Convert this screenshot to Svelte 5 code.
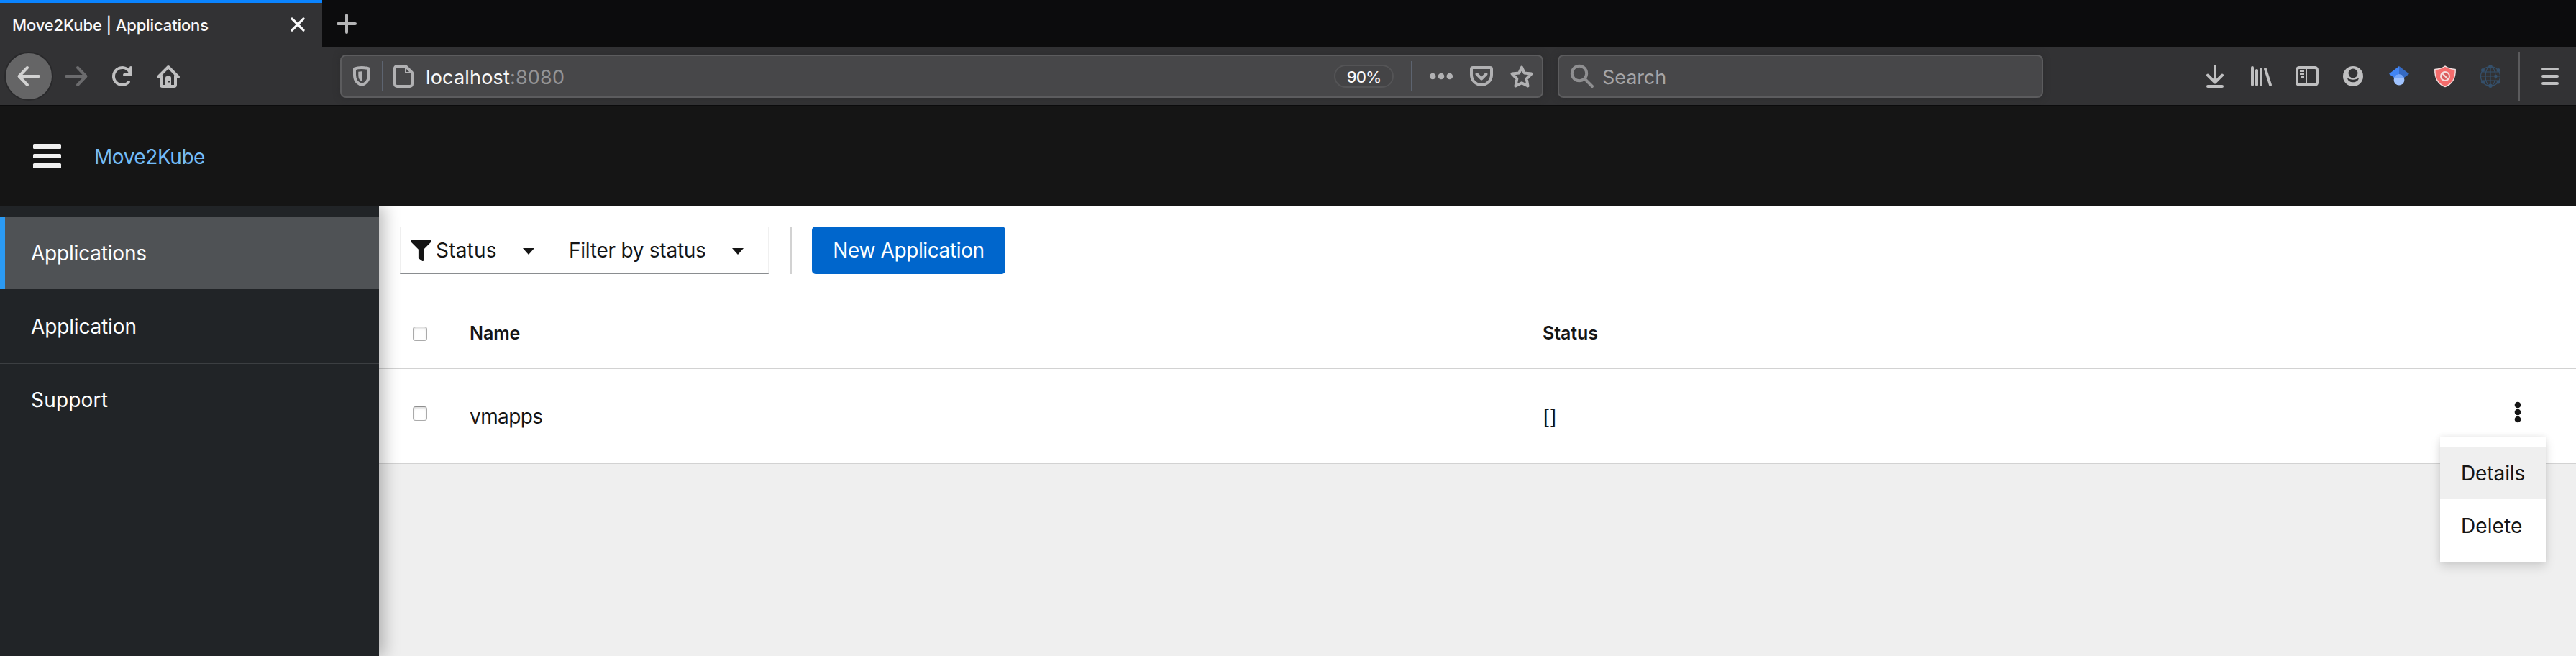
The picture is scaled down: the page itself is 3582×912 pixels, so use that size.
<script>
  const navItems = [
    { label: 'Applications', active: true, key: 'apps' },
    { label: 'Application', active: false, key: 'app' },
    { label: 'Support', active: false, key: 'support' }
  ];
</script>

<div class="window">
  <div class="tabs">
    <div class="tab">
      <span class="tab-title">Move2Kube | Applications</span>
      <svg class="close" viewBox="0 0 20 20"><path d="M2 2L18 18M18 2L2 18" /></svg>
    </div>
    <svg class="plus" viewBox="0 0 28 28"><path d="M14 2V26M2 14H26" /></svg>
  </div>

  <div class="toolbar">
    <div class="back"><svg class="ic" viewBox="0 0 32 32"><path d="M30 16H3M14 4L2.5 16L14 28" /></svg></div>
    <svg class="ic forward" viewBox="0 0 32 32"><path d="M2 16H29M18 4L29.5 16L18 28" /></svg>
    <svg class="ic" viewBox="0 0 32 32">
      <path d="M24.9 24A12 12 0 1 1 26 9.4" /><path d="M28 4V14H19" /><path class="fill" d="M28 6V14H22Z" />
    </svg>
    <svg class="ic" viewBox="0 0 32 32">
      <path d="M2 17L16 3L30 17M6 15V28a2 2 0 0 0 2 2H24a2 2 0 0 0 2-2V15" />
      <path class="fill" fill-rule="evenodd" d="M12 31V18a2 2 0 0 1 2-2h4a2 2 0 0 1 2 2V31ZM16 22h2.2v2.4H16Z" />
    </svg>

    <div class="field url">
      <svg class="ic" viewBox="0 0 32 32">
        <path d="M16 4C12 4 8.500 4.600 6 5.600V14C6 21.500 9.500 26 16 28C22.500 26 26 21.500 26 14V5.600C23.500 4.600 20 4 16 4Z" />
        <path class="fill" d="M16 9.300V23C13 21.500 11.300 19 11.300 15V9.800Z" />
      </svg>
      <i class="rule"></i>
      <svg class="ic page" viewBox="0 0 32 32">
        <path d="M7 2H19L28 11V27a3 3 0 0 1-3 3H7a3 3 0 0 1-3-3V5a3 3 0 0 1 3-3Z" />
        <path class="thin" d="M19 3V11H28" />
      </svg>
      <span class="address">localhost<em>:8080</em></span>
      <span class="zoom">90%</span>
      <i class="rule"></i>
      <svg class="ic fill" viewBox="0 0 32 32"><circle cx="4.200" cy="16" r="4.300" /><circle cx="16" cy="16" r="4.300" /><circle cx="27.800" cy="16" r="4.300" /></svg>
      <svg class="ic" viewBox="0 0 32 32"><path d="M4 4H28a2 2 0 0 1 2 2V14A14 14 0 0 1 2 14V6a2 2 0 0 1 2-2ZM9.500 13L16 19.500L22.500 13" /></svg>
      <svg class="ic" viewBox="0 0 32 32"><path d="M16 3.500L19.700 11.500L29.500 12.500L22.700 19.500L24.500 29.500L16 25.200L7.500 29.500L9.300 19.500L2.500 12.500L12.300 11.500Z" /></svg>
    </div>

    <div class="field search">
      <svg class="ic" viewBox="0 0 32 32"><circle cx="12" cy="12" r="10.200" /><path d="M19.500 19.500L30 30" /></svg>
      <span>Search</span>
    </div>

    <div class="actions">
      <svg class="ic" viewBox="0 0 32 32"><path d="M16 2V24M6 14.500L16 24.500L26 14.500M6 30H26" /></svg>
      <svg class="ic" viewBox="0 0 32 32"><path d="M4 4V28M10 8V28M16 6V28M22 6L29 28" /></svg>
      <svg class="ic" viewBox="0 0 32 32"><rect x="2" y="4" width="28" height="24" rx="3" /><path class="thin" d="M15 4V28M6 9H12M6 13H12M8 17H12" /></svg>
      <svg class="ic" viewBox="0 0 32 32">
        <circle class="fill" cx="16" cy="16" r="14" /><circle class="hole" cx="16" cy="12" r="6.400" />
        <path class="hole" d="M8 18.300C12 21.500 20 21.500 24 18.300C23 26.300 9 26.300 8 18.300Z" />
      </svg>
      <svg class="ic color" viewBox="0 0 32 32">
        <path fill="#4285f4" d="M16 2L2 12.700L9 18H16Z" /><path fill="#356ac3" d="M16 2L30 12.700L23 18H16Z" />
        <circle fill="#a0c3ff" cx="16" cy="21" r="7.400" /><path fill="#76a7fa" d="M9.200 18a7.400 7.400 0 0 1 13.600 0Z" />
      </svg>
      <svg class="ic color" viewBox="0 0 32 32">
        <path fill="#f46c6c" stroke="#f1dede" stroke-width="1.500" d="M16 2C12 5 7 6.200 1.800 6.400C1.500 19 5.500 26.500 16 30.500C26.500 26.500 30.500 19 30.200 6.400C25 6.200 20 5 16 2Z" />
        <circle fill="#d95c5d" stroke="#f4dcdc" stroke-width="2" cx="16" cy="16" r="6" /><path stroke="#f4dcdc" stroke-width="2" d="M12 12L20 20" />
      </svg>
      <svg class="ic globe" viewBox="0 0 32 32">
        <circle cx="15" cy="16" r="13.500" /><ellipse cx="15" cy="16" rx="7" ry="13.500" />
        <path d="M15 2V30M1.500 16H28.500M4 10H26M4 22H26" />
        <g class="nodes"><circle cx="15" cy="2.700" r="2.700" /><circle cx="15" cy="29.300" r="2.700" /><circle cx="4.500" cy="7.500" r="2.500" /><circle cx="26" cy="7.500" r="2.500" /><circle cx="4.500" cy="24" r="2.500" /><circle cx="26" cy="24" r="2.500" /><circle cx="22.400" cy="16" r="2.300" /></g>
      </svg>
      <i class="tall"></i>
      <svg class="ic" viewBox="0 0 32 32"><path d="M6 6H26M6 16H26M6 26H26" /></svg>
    </div>
  </div>

  <header>
    <div class="burger"><i></i><i></i><i></i></div>
    <span class="brand">Move2Kube</span>
  </header>

  <div class="body">
    <nav>
      {#each navItems as item (item.key)}
        <div class="nav-item {item.key}" class:active={item.active}>{item.label}</div>
      {/each}
    </nav>
    <main>
      <div class="content">
        <div class="filters">
          <div class="select kind">
            <svg class="funnel" viewBox="0 0 512 512"><path d="M487.976 0H24.028C2.710 0-8.047 25.866 7.058 40.971L192 225.941V432c0 7.831 3.821 15.170 10.237 19.662l80 55.980C298.020 518.690 320 507.493 320 487.980V225.941L504.942 40.971C520.021 25.896 509.338 0 487.976 0Z" /></svg>
            <span>Status</span><b class="caret"></b>
          </div>
          <div class="select value"><span>Filter by status</span><b class="caret"></b></div>
          <i class="sep"></i>
          <div class="button">New Application</div>
        </div>
        <div class="row head">
          <i class="check"></i><span class="name">Name</span><span class="status">Status</span>
        </div>
        <div class="row data">
          <i class="check"></i><span class="name">vmapps</span><span class="status">[]</span>
          <div class="kebab">
            <svg viewBox="0 0 10 30"><circle cx="5" cy="5" r="4.300" /><circle cx="5" cy="15" r="4.300" /><circle cx="5" cy="25" r="4.300" /></svg>
            <div class="menu"><div class="option hover">Details</div><div class="option delete">Delete</div></div>
          </div>
        </div>
      </div>
    </main>
  </div>
</div>

<style>
  :global(body) { margin: 0; background: #efefef; }
  .window { width: 3582px; height: 912px; overflow: hidden; display: flex; flex-direction: column; font-family: Inter, "Liberation Sans", sans-serif; font-size: 28px; color: #151515; white-space: nowrap; }
  i, em { font-style: normal; }
  svg { display: block; flex: none; }

  .tabs { height: 66px; flex: none; display: flex; background: #0c0c0d; }
  .tab { box-sizing: border-box; width: 448px; border-top: 4px solid #0a84ff; background: #323234; display: flex; align-items: flex-start; justify-content: space-between; padding: 16px 24px 0 17px; }
  .tab-title { color: #f9f9fa; font-size: 22px; font-weight: 500; line-height: 30px; letter-spacing: -0.12px; }
  .close { width: 20px; height: 20px; margin-top: 4px; stroke: #f9f9fa; stroke-width: 3.2; stroke-linecap: round; }
  .plus { width: 28px; height: 28px; margin: 19px 0 0 20px; stroke: #b5b5b6; stroke-width: 4; stroke-linecap: round; }

  .toolbar { box-sizing: border-box; height: 82px; flex: none; display: flex; align-items: center; background: #323234; border-bottom: 2px solid #0c0c0d; padding: 0 20px 0 6px; }
  .ic { width: 32px; height: 32px; overflow: visible; fill: none; stroke: #bfbfc0; stroke-width: 4; stroke-linecap: round; stroke-linejoin: round; }
  .ic .fill, .ic.fill { fill: #bfbfc0; stroke: none; }
  .ic .thin { stroke-width: 2; stroke-linecap: butt; }
  .ic .hole { fill: #323234; stroke: none; }
  .ic.color { stroke: none; }
  .toolbar > .ic { margin-right: 32px; }
  .back { box-sizing: border-box; width: 68px; height: 68px; margin-right: 16px; border: 2px solid #29292b; border-radius: 50%; background: #656566; display: flex; align-items: center; justify-content: center; }
  .back .ic { stroke: #d2d2d2; }
  .ic.forward { stroke: #6b6b6d; }
  .field { box-sizing: border-box; height: 60px; border: 2px solid #5c5c5e; border-radius: 8px; background: #474749; display: flex; align-items: center; box-shadow: 0 0 10px #2c2c2e; }
  .field .ic { stroke: #b1b1b3; }
  .field .fill { fill: #b1b1b3; stroke: none; }
  .url { width: 1673px; margin-left: 191px; padding: 0 12px; }
  .rule { width: 2px; height: 42px; margin-left: 12px; background: #5d6470; }
  .page { margin: 0 15px 0 12px; }
  .address { flex: 1; color: #f9f9fa; font-size: 27px; line-height: 40px; padding-top: 3px; letter-spacing: 0.18px; }
  .address em { color: #949496; }
  .zoom { box-sizing: border-box; width: 83px; height: 32px; border: 2px solid #545456; border-radius: 16px; color: #f9f9fa; font-size: 22px; font-weight: 500; line-height: 30px; letter-spacing: -0.8px; text-align: center; background: #444446; }
  .zoom ~ .rule { margin-left: 24px; }
  .zoom ~ .ic { margin-left: 24px; }
  .field.url .ic.fill { stroke: none; }
  .search { width: 675px; margin-left: 20px; padding-left: 16px; }
  .search .ic { stroke: #8f8f91; }
  .search span { color: #a5a5a7; font-size: 27px; line-height: 40px; padding-top: 3px; margin-left: 12px; letter-spacing: -0.1px; }
  .actions { margin-left: auto; display: flex; align-items: center; gap: 32px; }
  .tall { width: 2px; height: 68px; margin: 0 -6px 0 -10px; background: #5b5b5d; }
  .globe { stroke: #35506b; stroke-width: 1.2; }
  .nodes { fill: #35506b; stroke: none; }

  header { height: 138px; flex: none; background: #151515; display: flex; align-items: flex-start; padding-left: 46px; }
  .burger { width: 39px; margin-top: 52px; display: flex; flex-direction: column; gap: 7px; }
  .burger i { height: 6.600px; border-radius: 1.500px; background: #f0f0f0; }
  .brand { margin: 50px 0 0 46px; color: #73bcf7; line-height: 40px; letter-spacing: -0.45px; }

  .body { flex: 1; display: flex; min-height: 0; }
  nav { width: 527px; flex: none; background: #212427; padding-top: 15px; box-shadow: 8px 0 20px rgba(3, 3, 3, 0.25); position: relative; clip-path: inset(0 -40px 0 0); color: #fff; }
  .nav-item { box-sizing: border-box; height: 102px; padding-left: 43px; line-height: 101px; letter-spacing: -0.15px; border-bottom: 1px solid #3c3f42; }
  .nav-item.active { height: 101px; border-bottom: 0; border-left: 7px solid #2b9af3; background: #4f5255; padding-left: 36px; line-height: 102px; letter-spacing: -0.2px; margin-bottom: 2px; }
  .nav-item.support { letter-spacing: 0.2px; }

  main { flex: 1; min-width: 0; background: #efefef; }
  .content { background: #fff; }
  .filters { height: 66px; padding: 29px 0 0 29px; display: flex; }
  .select { box-sizing: border-box; height: 66px; border: 1px solid #f0f0f0; border-bottom: 2px solid #8a8d90; display: flex; align-items: center; line-height: 40px; padding-top: 1px; }
  .kind { width: 221px; border-right: 0; padding-left: 14px; letter-spacing: 0.2px; }
  .value { width: 292px; padding-left: 13px; letter-spacing: -0.25px; }
  .funnel { width: 29px; height: 29px; margin-right: 6px; fill: #151515; }
  .caret { margin: 2px 0 0 auto; border: 8.600px solid transparent; border-top: 9.500px solid #151515; border-bottom: 0; }
  .kind .caret { margin-right: 34px; }
  .value .caret { margin-right: 34px; }
  .sep { width: 1.500px; height: 66px; margin-left: 30px; background: #d2d2d2; }
  .button { width: 269px; height: 66px; margin-left: 28.500px; border-radius: 5px; background: #06c; color: #fff; text-align: center; line-height: 67px; letter-spacing: -0.38px; }

  .row { box-sizing: border-box; display: grid; grid-template-columns: 79px 1492px 1fr auto; padding-left: 47px; border-bottom: 1px solid #d2d2d2; }
  .head { height: 132px; padding-top: 73px; font-size: 25px; font-weight: 600; line-height: 19px; letter-spacing: -0.1px; }
  .data { height: 132px; padding-top: 52px; line-height: 28px; }
  .check { box-sizing: border-box; width: 20px; height: 20px; border: 1px solid #aaa; border-top-color: #8e8e8e; border-radius: 4px; background: #fff; box-shadow: inset 0 2px 3px #dedede; }
  .data .name { letter-spacing: -0.6px; }
  .data .status { padding-top: 1px; letter-spacing: -0.5px; }
  .kebab { position: relative; width: 86px; }
  .kebab svg { width: 10px; height: 30px; margin-top: -7px; fill: #151515; }
  .menu { box-sizing: border-box; position: absolute; top: 42px; right: 42px; width: 147px; height: 174px; padding-top: 14px; background: #fff; box-shadow: 0 7px 14px rgba(3, 3, 3, 0.13), 0 0 8px rgba(3, 3, 3, 0.07); }
  .option { height: 73px; padding-left: 29px; line-height: 75px; letter-spacing: -0.1px; }
  .delete { letter-spacing: 0.1px; }
  .hover { background: #efefef; }
</style>
